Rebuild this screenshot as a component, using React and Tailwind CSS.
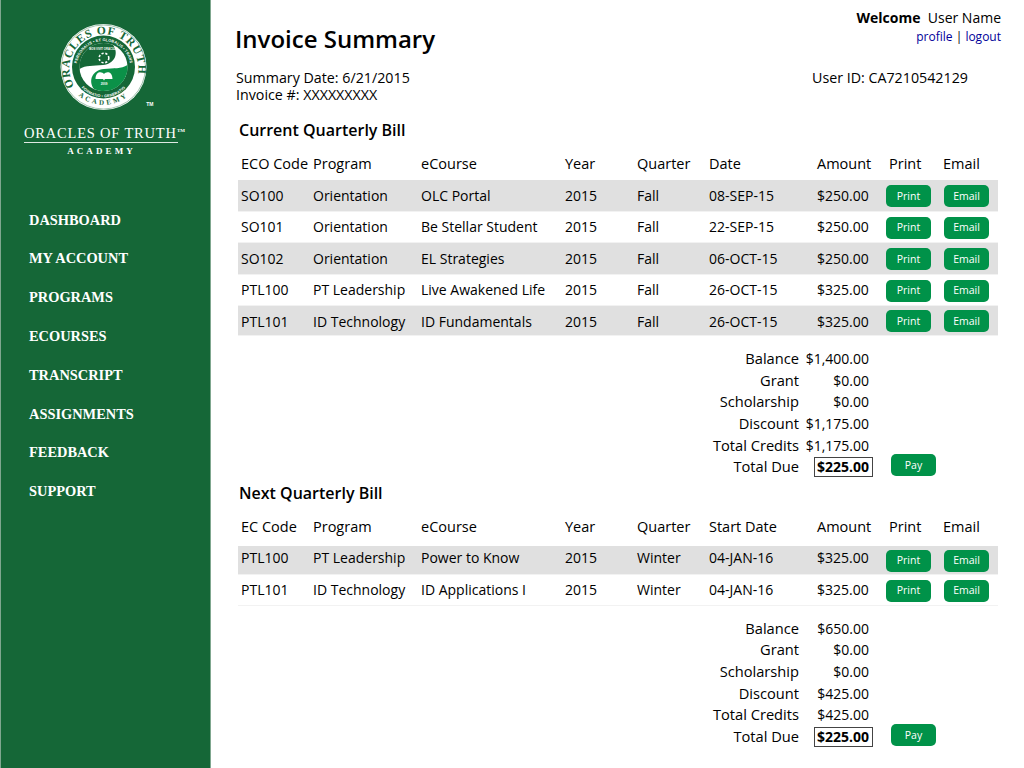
import React from 'react';

const navItems = ['DASHBOARD', 'MY ACCOUNT', 'PROGRAMS', 'ECOURSES', 'TRANSCRIPT', 'ASSIGNMENTS', 'FEEDBACK', 'SUPPORT'];

const currentRows = [
  ['SO100', 'Orientation', 'OLC Portal', '2015', 'Fall', '08-SEP-15', '$250.00'],
  ['SO101', 'Orientation', 'Be Stellar Student', '2015', 'Fall', '22-SEP-15', '$250.00'],
  ['SO102', 'Orientation', 'EL Strategies', '2015', 'Fall', '06-OCT-15', '$250.00'],
  ['PTL100', 'PT Leadership', 'Live Awakened Life', '2015', 'Fall', '26-OCT-15', '$325.00'],
  ['PTL101', 'ID Technology', 'ID Fundamentals', '2015', 'Fall', '26-OCT-15', '$325.00'],
];

const nextRows = [
  ['PTL100', 'PT Leadership', 'Power to Know', '2015', 'Winter', '04-JAN-16', '$325.00'],
  ['PTL101', 'ID Technology', 'ID Applications I', '2015', 'Winter', '04-JAN-16', '$325.00'],
];

const Logo = () => (
  <svg className="block" width="100" height="100" viewBox="0 0 100 100">
    <defs>
      <path id="ring-top" d="M 21 69 A 34.5 34.5 0 1 1 85 57" />
      <path id="ring-bottom" d="M 12 55 A 39 39 0 0 0 89 55" />
      <path id="ring-inner" d="M 28 66 A 27 27 0 1 1 73 66" />
      <path id="ring-inner-bottom" d="M 21.5 58 A 30 30 0 0 0 79.5 58" />
    </defs>
    <circle cx="50.5" cy="50" r="43" fill="#fff" />
    <circle cx="50.5" cy="50" r="42" fill="none" stroke="#156737" strokeWidth="0.4" />
    <text fontFamily="Liberation Serif, serif" fontSize="11.5" fontWeight="700" fill="#156737" letterSpacing="0.9">
      <textPath href="#ring-top" startOffset="50%" textAnchor="middle">ORACLES OF TRUTH</textPath>
    </text>
    <text fontFamily="Liberation Serif, serif" fontSize="7" fontWeight="700" fill="#156737" letterSpacing="2.6">
      <textPath href="#ring-bottom" startOffset="50%" textAnchor="middle">ACADEMY</textPath>
    </text>
    <circle cx="50.5" cy="50" r="31.5" fill="#156737" />
    <text fontFamily="Liberation Sans, sans-serif" fontSize="3.8" fontWeight="700" fill="#fff" letterSpacing="0.15">
      <textPath href="#ring-inner" startOffset="50%" textAnchor="middle">PERSONALIS • ET GLOBALIS • TRANS</textPath>
    </text>
    <text fontFamily="Liberation Sans, sans-serif" fontSize="3.8" fontWeight="700" fill="#fff" letterSpacing="0.15">
      <textPath href="#ring-inner-bottom" startOffset="50%" textAnchor="middle">FORMATIO • GENERATIO</textPath>
    </text>
    <circle cx="50.5" cy="50" r="24" fill="#fff" />
    <path d="M 26.5 52 A 24 24 0 0 1 60 28 C 66 36 62 47 50 48 C 40 49 33 48 26.5 52 Z" fill="#156737" />
    <path d="M 74.5 48 A 24 24 0 0 1 41 72 C 35 64 39 53 51 52 C 61 51 68 52 74.5 48 Z" fill="#0b9148" />
    <text x="50.5" y="33" fontFamily="Liberation Sans, sans-serif" fontSize="2.8" fontWeight="700" fill="#fff" textAnchor="middle">BOS VIVIT ORACULA</text>
    <circle cx="51" cy="41" r="4.8" fill="none" stroke="#fff" strokeWidth="1.6" strokeDasharray="2.2 1.7" />
    <path d="M 42.5 62 C 42.5 54 49 54 51 57 C 53 54 59.5 54 59.5 62 L 52 62 L 51 63.5 L 50 62 Z" fill="#fff" />
    <text x="51" y="68" fontFamily="Liberation Sans, sans-serif" fontSize="3" fontWeight="700" fill="#fff" textAnchor="middle">2009</text>
  </svg>
);

const GreenButton = ({ label, className, shift = 0 }) => (
  <button
    className={`h-[22px] rounded-[5px] bg-[#009249] text-[10.5px] leading-none text-white ${className}`}
    style={{ marginTop: shift * 2 }}
  >
    {label}
  </button>
);

const colClasses = ['w-[75px] pl-[3px]', 'w-[108px]', 'w-[144px]', 'w-[72px]', 'w-[72px]', 'w-[108px]', 'w-[69px]', 'w-[54px] pl-[3px]', 'w-[50px] pl-[3px]'];

const BillTable = ({ headers, rows, stripeHeights, textShift, btnShift, gap }) => (
  <div className="ml-[3px] w-[760px]">
    <div className="flex h-[22px] items-center text-[14.5px]">
      {headers.map((h, i) => (
        <div key={h} className={colClasses[i]}>{h}</div>
      ))}
    </div>
    <div style={{ marginTop: gap }}>
      {rows.map((row, i) => (
        <div
          key={row[0] + row[2]}
          className={`flex items-center border-b border-[#f2f2f2] ${i % 2 === 0 ? 'bg-[#e0e0e0]' : 'bg-white'}`}
          style={{ height: stripeHeights[i] }}
        >
          {row.map((cell, j) => (
            <div key={j} className={colClasses[j]} style={{ marginTop: textShift[i] * 2 }}>{cell}</div>
          ))}
          <div className="w-[58px]"><GreenButton label="Print" className="w-[45px]" shift={btnShift[i]} /></div>
          <div className="w-[50px]"><GreenButton label="Email" className="w-[45px]" shift={btnShift[i]} /></div>
        </div>
      ))}
    </div>
  </div>
);

const Summary = ({ values, className }) => (
  <div className={`flex ${className}`}>
    <div className="w-[564px] shrink-0 text-right text-[14.67px]">
      {['Balance', 'Grant', 'Scholarship', 'Discount', 'Total Credits', 'Total Due'].map(l => (
        <div key={l} className="h-[21.7px] leading-[21.7px]">{l}</div>
      ))}
    </div>
    <div className="w-[70px] shrink-0 text-right">
      {values.map(v => (
        <div key={v.id} className="h-[21.7px] leading-[21.7px]">{v.text}</div>
      ))}
      <div className="relative h-[21.7px] font-bold leading-[21.7px]">
        $225.00
        <div className="absolute -right-[4px] top-[1px] h-[20px] w-[59px] border border-[#444]" />
      </div>
    </div>
    <div className="ml-[22px] flex items-end pb-[2px]">
      <GreenButton label="Pay" className="w-[45px]" />
    </div>
  </div>
);

const App = () => (
  <div className="flex h-[768px] w-[1024px] overflow-hidden bg-white font-['Open_Sans',sans-serif] text-[14px] text-black">
    <aside className="flex w-[211px] shrink-0 flex-col border-x border-x-[#7fa78f] bg-[#156737] text-white">
      <div className="flex w-[203px] flex-col items-center">
        <div className="relative mt-[17px]">
          <Logo />
          <span className="absolute -right-[1px] top-[85px] font-['Liberation_Sans',sans-serif] text-[5px] font-bold leading-none">TM</span>
        </div>
        <div className="relative mr-[3px] mt-[8px] w-[154px] whitespace-nowrap border-b border-[#dfe9e3] font-['Liberation_Serif',serif] text-[14.5px] leading-[17px] tracking-[0.8px]">
          ORACLES OF TRUTH
          <span className="absolute -right-[7px] top-[3px] text-[5px] font-bold leading-none tracking-normal">TM</span>
        </div>
        <div className="mr-[2px] mt-[3px] font-['Liberation_Serif',serif] text-[9px] font-bold leading-[11px] tracking-[3.1px]">ACADEMY</div>
      </div>
      <nav className="mt-[44px] w-full pl-[28px] font-['Liberation_Serif',serif] text-[14.4px] font-bold">
        {navItems.map(item => (
          <div key={item} className="flex h-[38.8px] items-center">{item}</div>
        ))}
      </nav>
    </aside>

    <main className="min-w-0 flex-1 pl-[24px]">
      <div className="flex items-start justify-between pr-[23px]">
        <h1 className="mt-[23px] text-[24px] font-semibold leading-[32px]">Invoice Summary</h1>
        <div className="mt-[9px] text-right">
          <div className="leading-[18px]"><span className="font-bold">Welcome</span>&nbsp; User Name</div>
          <div className="mt-[1px] text-[12px] leading-[17px]">
            <span className="text-[#000099]">profile</span> | <span className="text-[#000099]">logout</span>
          </div>
        </div>
      </div>

      <div className="mt-[14px] flex text-[14.25px] leading-[17px]">
        <div className="w-[577px] pl-[1px]">
          <div>Summary Date: 6/21/2015</div>
          <div>Invoice #: XXXXXXXXX</div>
        </div>
        <div>User ID: CA7210542129</div>
      </div>

      <h2 className="ml-[4px] mt-[16px] text-[16px] font-semibold leading-[22px]">Current Quarterly Bill</h2>
      <div className="mt-[12px]">
        <BillTable
          headers={['ECO Code', 'Program', 'eCourse', 'Year', 'Quarter', 'Date', 'Amount', 'Print', 'Email']}
          rows={currentRows}
          stripeHeights={[32, 31, 32, 31, 30]}
          textShift={[0, -1, 0, -1, 1]}
          btnShift={[-1, 0, 0, 0, -1]}
          gap={5}
        />
      </div>
      <Summary
        className="mt-[12px]"
        values={[
          { id: 'b', text: '$1,400.00' },
          { id: 'g', text: '$0.00' },
          { id: 's', text: '$0.00' },
          { id: 'd', text: '$1,175.00' },
          { id: 't', text: '$1,175.00' },
        ]}
      />

      <h2 className="ml-[4px] mt-[3.5px] text-[16px] font-semibold leading-[22px]">Next Quarterly Bill</h2>
      <div className="mt-[12px]">
        <BillTable
          headers={['EC Code', 'Program', 'eCourse', 'Year', 'Quarter', 'Start Date', 'Amount', 'Print', 'Email']}
          rows={nextRows}
          stripeHeights={[29, 31]}
          textShift={[-2.5, 0]}
          btnShift={[1, 1]}
          gap={8}
        />
      </div>
      <Summary
        className="mt-[12px]"
        values={[
          { id: 'b', text: '$650.00' },
          { id: 'g', text: '$0.00' },
          { id: 's', text: '$0.00' },
          { id: 'd', text: '$425.00' },
          { id: 't', text: '$425.00' },
        ]}
      />
    </main>
  </div>
);

export default App;
